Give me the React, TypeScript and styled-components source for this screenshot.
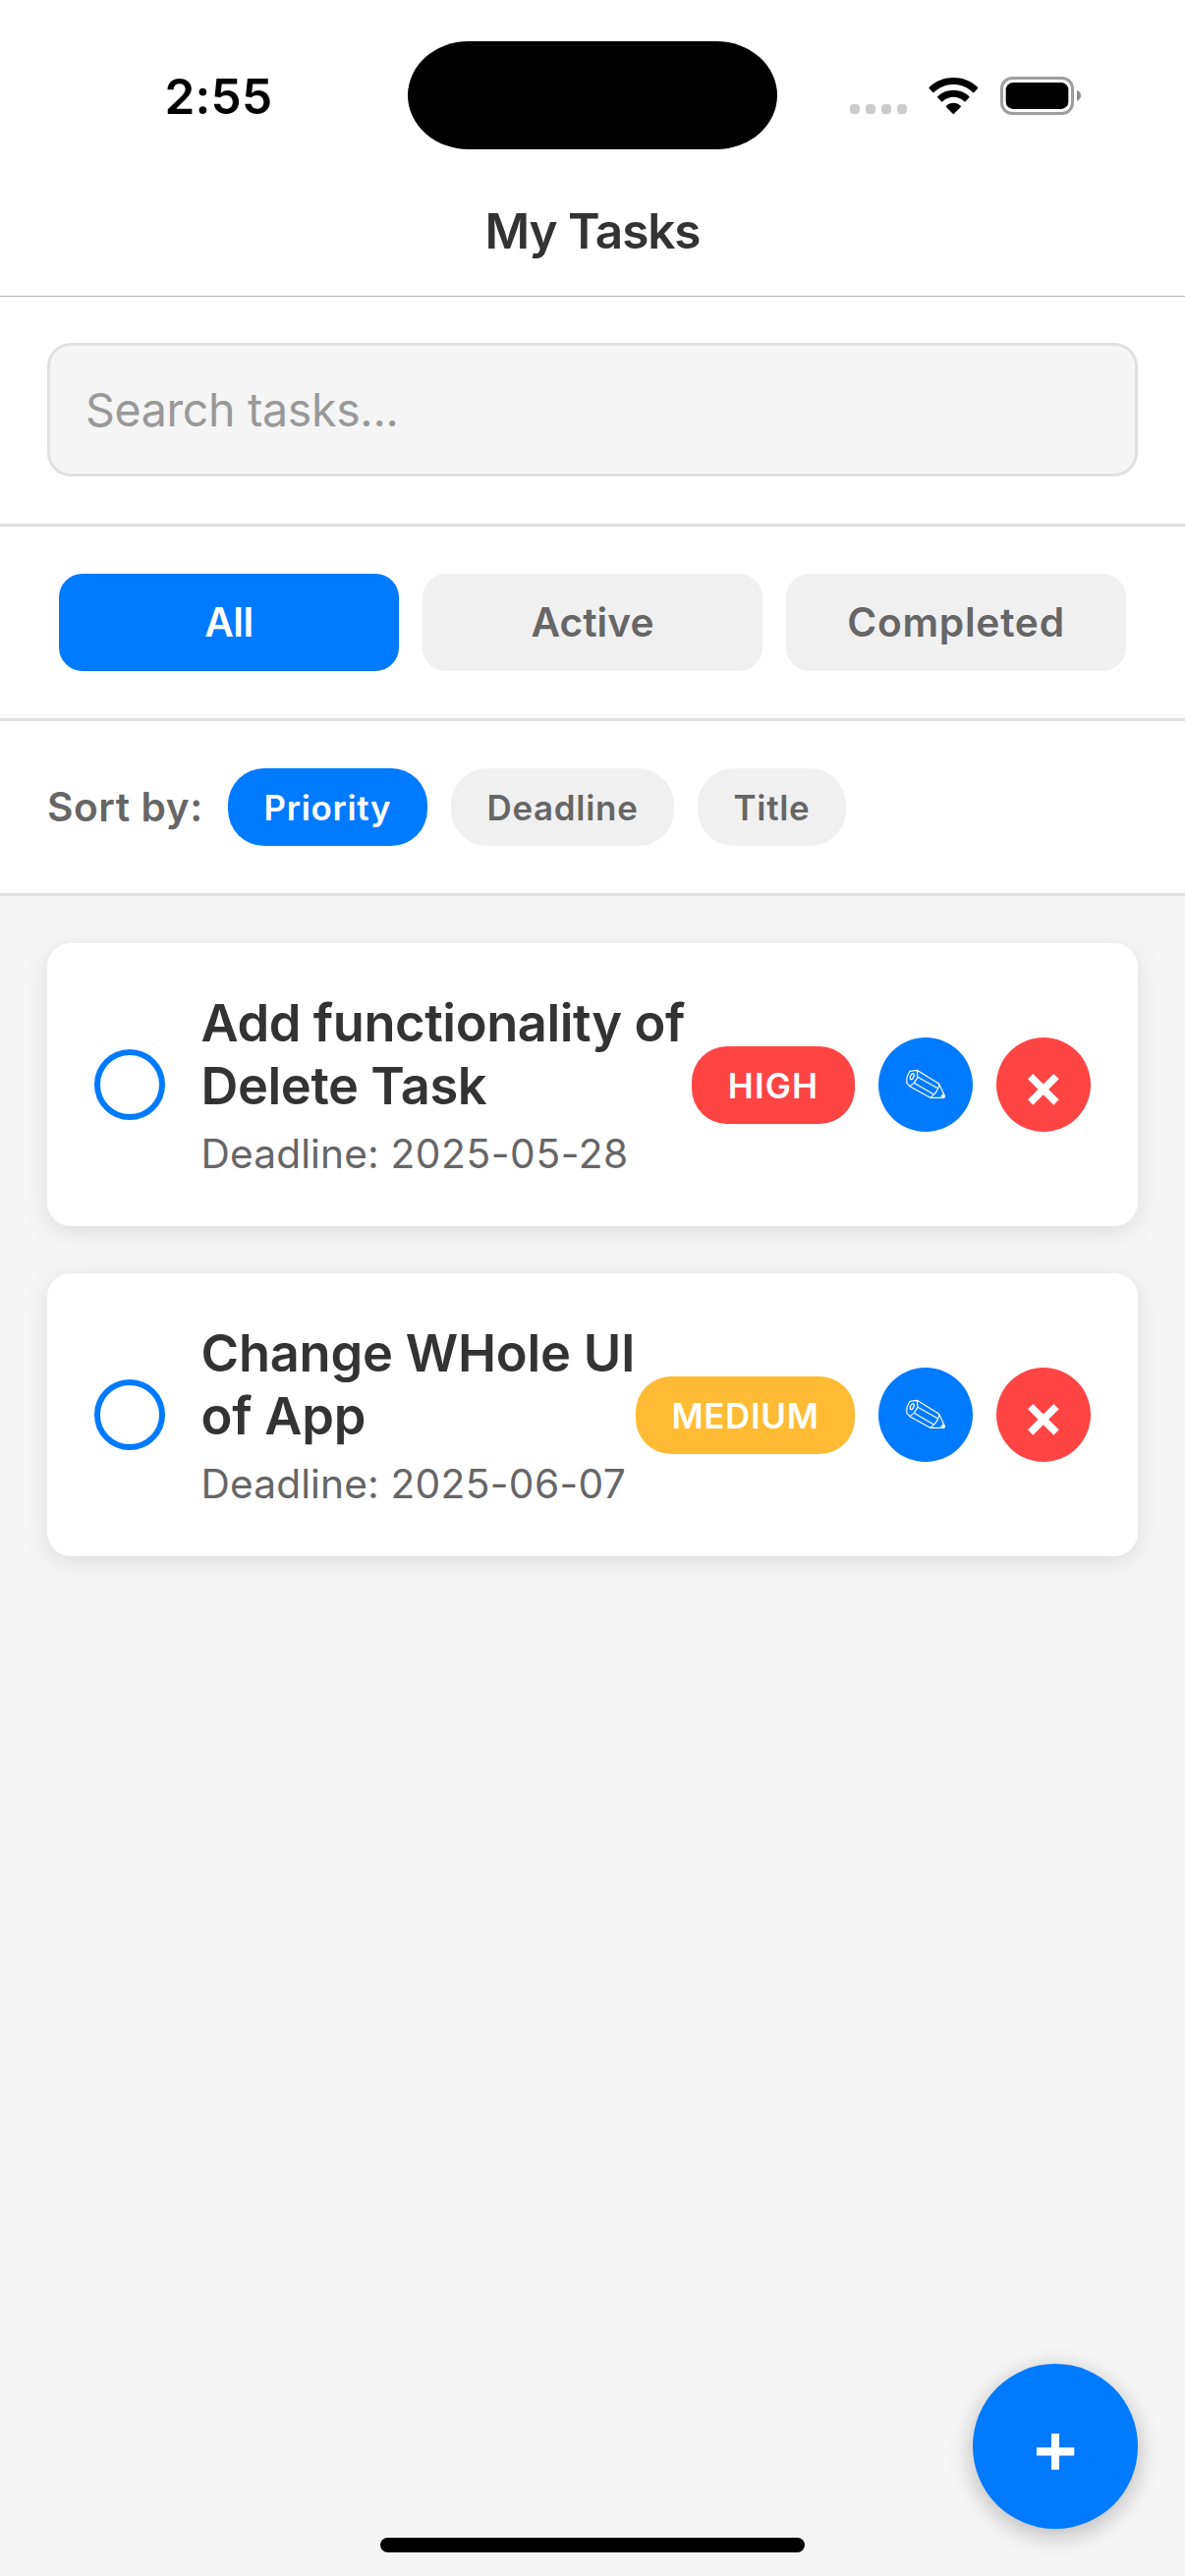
import React from "react";
import styled, { createGlobalStyle } from "styled-components";

const BLUE = "#007aff";
const DANGER = "#ff4444";
const LINE = "#e0e0e0";
const SURFACE = "#f5f5f5";
const CHIP = "#f0f0f0";

const GlobalStyle = createGlobalStyle`
  * { box-sizing: border-box; }
  body {
    margin: 0;
    background: ${SURFACE};
    font-family: Inter, "Liberation Sans", sans-serif;
  }
  button, input { font-family: inherit; margin: 0; border: none; }
`;

const Screen = styled.div`
  position: relative;
  display: flex;
  flex-direction: column;
  width: 1206px;
  height: 2622px;
  overflow: hidden;
  background: ${SURFACE};
`;

const StatusBar = styled.div`
  display: flex;
  align-items: center;
  height: 194px;
  padding-left: 167.4px;
  background: #fff;
`;

const Time = styled.div`
  width: 247.6px;
  padding-top: 1px;
  font-size: 49.5px;
  font-weight: 600;
  line-height: 60px;
  letter-spacing: 0.28px;
  color: #000;
`;

const Island = styled.div`
  width: 376px;
  height: 110px;
  margin-right: 74px;
  border-radius: 62px / 55px;
  background: #000;
`;

const StatusIcons = styled.svg`
  display: block;
  width: 235px;
  height: 42px;
`;

const Header = styled.header`
  display: flex;
  justify-content: center;
  height: 108px;
  padding-top: 11px;
  background: #fff;
  border-bottom: 1px solid #b2b2b2;
`;

const HeaderTitle = styled.h1`
  margin: 0;
  font-size: 49.5px;
  font-weight: 600;
  line-height: 60px;
  letter-spacing: -1.1px;
  color: #333;
`;

const Section = styled.section<{ $pad: string; $gap?: number }>`
  display: flex;
  align-items: center;
  gap: ${(p) => p.$gap ?? 0}px;
  padding: ${(p) => p.$pad};
  background: #fff;
  border-bottom: 3px solid ${LINE};
`;

const SearchInput = styled.input`
  width: 100%;
  height: 136px;
  padding: 0 36px;
  font-size: 46.5px;
  letter-spacing: -0.35px;
  color: #333;
  background: ${SURFACE};
  border: 3px solid ${LINE};
  border-radius: 24px;
  outline: none;
  &::placeholder { color: #999; opacity: 1; }
`;

const FilterButton = styled.button<{ $active?: boolean; $track: number }>`
  flex: 1;
  height: 99px;
  padding: 0;
  font-size: 40.7px;
  font-weight: 600;
  letter-spacing: ${(p) => p.$track}px;
  color: ${(p) => (p.$active ? "#fff" : "#666")};
  background: ${(p) => (p.$active ? BLUE : CHIP)};
  border-radius: 24px;
`;

const SortLabel = styled.span`
  width: 160px;
  font-size: 40.7px;
  font-weight: 600;
  line-height: 50px;
  letter-spacing: 0.55px;
  white-space: nowrap;
  color: #666;
`;

const SortPill = styled.button<{ $active?: boolean; $width: number }>`
  width: ${(p) => p.$width}px;
  height: 79px;
  padding: 0;
  font-size: 34.9px;
  font-weight: 600;
  letter-spacing: 0.72px;
  color: ${(p) => (p.$active ? "#fff" : "#666")};
  background: ${(p) => (p.$active ? BLUE : CHIP)};
  border-radius: 37px;
`;

const TaskList = styled.main`
  display: flex;
  flex: 1;
  flex-direction: column;
  gap: 48px;
  padding: 48px;
`;

const Card = styled.article`
  display: flex;
  align-items: center;
  height: 288px;
  padding: 0 48px;
  background: #fff;
  border-radius: 24px;
  box-shadow: 0 6px 24px rgba(0, 0, 0, 0.1);
`;

const Checkbox = styled.button`
  flex: none;
  width: 72px;
  height: 72px;
  margin-right: 36px;
  padding: 0;
  background: transparent;
  border: 6px solid ${BLUE};
  border-radius: 50%;
`;

const TaskInfo = styled.div`
  flex: 1;
  min-width: 0;
  padding-left: 0.5px;
  white-space: pre;
`;

const TaskTitle = styled.h2<{ $track: number }>`
  margin: 0 0 12px;
  font-size: 52.4px;
  font-weight: 600;
  line-height: 64px;
  letter-spacing: ${(p) => p.$track}px;
  color: #333;
`;

const Deadline = styled.p`
  margin: 0;
  padding-top: 1px;
  font-size: 40.7px;
  line-height: 50px;
  letter-spacing: 0.1px;
  color: #666;
`;

const DueDate = styled.span<{ $track: number }>`
  letter-spacing: ${(p) => p.$track}px;
`;

const Badge = styled.span<{ $color: string; $width: number; $track: number }>`
  display: flex;
  flex: none;
  align-items: center;
  justify-content: center;
  width: ${(p) => p.$width}px;
  height: 79px;
  margin-top: 1px;
  padding-top: 1px;
  font-size: 34.9px;
  font-weight: 600;
  letter-spacing: ${(p) => p.$track}px;
  color: #fff;
  background: ${(p) => p.$color};
  border-radius: 36px;
`;

const RoundButton = styled.button<{ $color: string }>`
  flex: none;
  width: 96px;
  height: 96px;
  margin-left: 24px;
  padding: 0;
  background: ${(p) => p.$color};
  border-radius: 50%;
  svg { display: block; width: 96px; height: 96px; }
`;

const AddButton = styled.button`
  position: absolute;
  right: 48px;
  bottom: 48px;
  width: 168px;
  height: 168px;
  padding: 0;
  background: ${BLUE};
  border-radius: 50%;
  box-shadow: 0 6px 24px rgba(0, 0, 0, 0.25);
  svg { display: block; width: 168px; height: 168px; }
`;

const HomeIndicator = styled.div`
  position: absolute;
  bottom: 24px;
  left: 387px;
  width: 432px;
  height: 15px;
  background: #000;
  border-radius: 8px;
`;

const PencilIcon = () => (
  <svg viewBox="638 348 286 288" preserveAspectRatio="none" fill="none" stroke="#fff" strokeWidth="3.4" strokeLinejoin="round">
    <path d="M755 448 L733 451 L724 470 L724 487 L733 497 L746 487 L757 469 Z" />
    <ellipse cx="740" cy="467" rx="5" ry="9.5" transform="rotate(22 740 467)" strokeWidth="3.8" />
    <path d="M755 448 L822 490 M757 469 L818 503 M746 487 L806 522 M733 497 L795 532" />
    <path d="M822 490 Q822 512 795 532 L837 532 Q840 530 838 525 Z" />
    <path d="M827 528 L835 520 L839 528 L837 532 Z" fill="#fff" strokeWidth="1.5" />
  </svg>
);

const CrossIcon = () => (
  <svg viewBox="0 0 288 288" stroke="#fff" strokeWidth="22.5">
    <path d="M104 119 L183 198 M183 119 L104 198" />
  </svg>
);

const tasks = [
  { title: "Add functionality of\nDelete Task", track: -0.4, due: "2025-05-28", dueTrack: 0.6, level: "HIGH", color: DANGER, width: 166, badgeTrack: 1.16 },
  { title: "Change WHole UI\nof App", track: -0.22, due: "2025-06-07", dueTrack: 0.35, level: "MEDIUM", color: "#ffbb33", width: 223, badgeTrack: 0.69 },
];

export default function App() {
  return (
    <Screen>
      <GlobalStyle />
      <StatusBar>
        <Time>2:55</Time>
        <Island />
        <StatusIcons viewBox="30 33 705 126">
          {[30, 78, 126, 174].map((x) => (
            <rect key={x} x={x} y="123" width="30" height="30" rx="11" fill="#cbcbcb" />
          ))}
          <path d="M272 71 C312 32 380 32 420 71 Q422 73 420 75 L409 87 Q407 89 405 87 C372 55 320 55 287 87 Q285 89 283 87 L272 75 Q270 73 272 71 Z" />
          <path d="M298 99 C324 74 368 74 394 99 Q396 101 394 103 L383 115 Q381 117 379 115 C361 97 331 97 313 115 Q311 117 309 115 L298 103 Q296 101 298 99 Z" />
          <path d="M324 128 C336 116 356 116 368 128 Q370 130 368 132 L348 152 Q346 154 344 152 L324 132 Q322 130 324 128 Z" />
          <rect x="493.5" y="43.5" width="216" height="108" rx="32" fill="none" stroke="#9e9e9e" strokeWidth="9" />
          <rect x="506" y="57" width="191" height="81" rx="22" />
          <path d="M723 80 C739 86 739 107 723 113 Z" fill="#8c8c8c" />
        </StatusIcons>
      </StatusBar>
      <Header>
        <HeaderTitle>My Tasks</HeaderTitle>
      </Header>
      <Section $pad="47px 48px 48px">
        <SearchInput placeholder="Search tasks..." />
      </Section>
      <Section $pad="48px 60px" $gap={24}>
        <FilterButton $active $track={-0.43}>All</FilterButton>
        <FilterButton $track={0.05}>Active</FilterButton>
        <FilterButton $track={0.75}>Completed</FilterButton>
      </Section>
      <Section $pad="48px" $gap={24}>
        <SortLabel>Sort by:</SortLabel>
        <SortPill $active $width={203}>Priority</SortPill>
        <SortPill $width={227}>Deadline</SortPill>
        <SortPill $width={151}>Title</SortPill>
      </Section>
      <TaskList>
        {tasks.map((t) => (
          <Card key={t.due}>
            <Checkbox aria-label="Toggle task" />
            <TaskInfo>
              <TaskTitle $track={t.track}>{t.title}</TaskTitle>
              <Deadline>
                {"Deadline: "}
                <DueDate $track={t.dueTrack}>{t.due}</DueDate>
              </Deadline>
            </TaskInfo>
            <Badge $color={t.color} $width={t.width} $track={t.badgeTrack}>{t.level}</Badge>
            <RoundButton $color={BLUE} aria-label="Edit"><PencilIcon /></RoundButton>
            <RoundButton $color={DANGER} aria-label="Delete"><CrossIcon /></RoundButton>
          </Card>
        ))}
      </TaskList>
      <AddButton aria-label="Add task">
        <svg viewBox="0 0 168 168" fill="#fff">
          <path d="M80 71 H88 V85.2 H103.3 V93.4 H88 V107.7 H80 V93.4 H64.9 V85.2 H80 Z" />
        </svg>
      </AddButton>
      <HomeIndicator />
    </Screen>
  );
}
